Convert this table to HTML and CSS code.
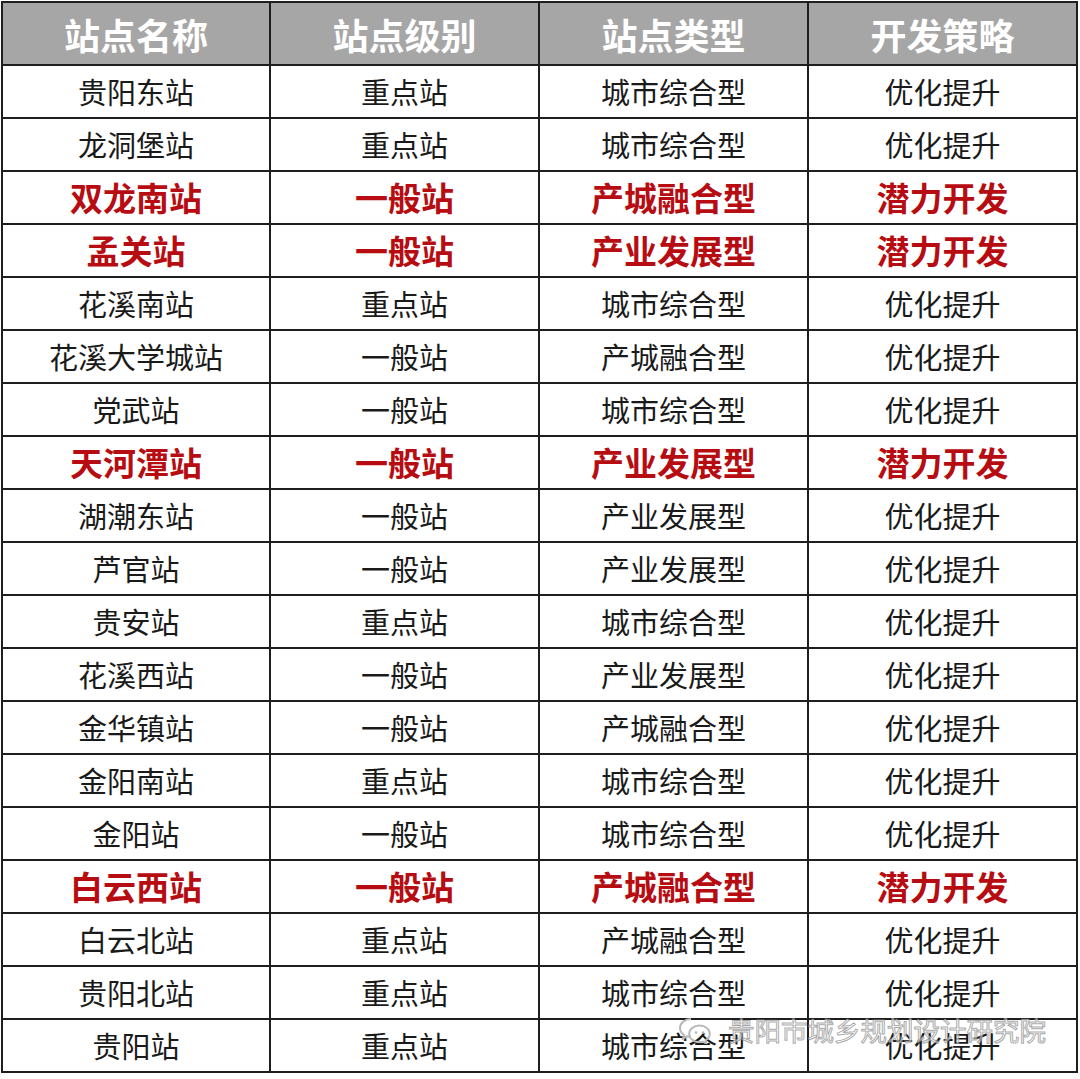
FILE: index.html
```html
<!DOCTYPE html>
<html lang="zh-CN">
<head>
<meta charset="utf-8">
<title>站点开发策略</title>
<link rel="stylesheet" href="styles.css">
</head>
<body>
<div class="page">
<table class="grid">
  <colgroup><col class="c1"><col class="c2"><col class="c3"><col class="c4"></colgroup>
  <thead>
    <tr><th>站点名称</th><th>站点级别</th><th>站点类型</th><th>开发策略</th></tr>
  </thead>
  <tbody>
    <tr><td>贵阳东站</td><td>重点站</td><td>城市综合型</td><td>优化提升</td></tr>
    <tr><td>龙洞堡站</td><td>重点站</td><td>城市综合型</td><td>优化提升</td></tr>
    <tr class="hl"><td>双龙南站</td><td>一般站</td><td>产城融合型</td><td>潜力开发</td></tr>
    <tr class="hl"><td>孟关站</td><td>一般站</td><td>产业发展型</td><td>潜力开发</td></tr>
    <tr><td>花溪南站</td><td>重点站</td><td>城市综合型</td><td>优化提升</td></tr>
    <tr><td>花溪大学城站</td><td>一般站</td><td>产城融合型</td><td>优化提升</td></tr>
    <tr><td>党武站</td><td>一般站</td><td>城市综合型</td><td>优化提升</td></tr>
    <tr class="hl"><td>天河潭站</td><td>一般站</td><td>产业发展型</td><td>潜力开发</td></tr>
    <tr><td>湖潮东站</td><td>一般站</td><td>产业发展型</td><td>优化提升</td></tr>
    <tr><td>芦官站</td><td>一般站</td><td>产业发展型</td><td>优化提升</td></tr>
    <tr><td>贵安站</td><td>重点站</td><td>城市综合型</td><td>优化提升</td></tr>
    <tr><td>花溪西站</td><td>一般站</td><td>产业发展型</td><td>优化提升</td></tr>
    <tr><td>金华镇站</td><td>一般站</td><td>产城融合型</td><td>优化提升</td></tr>
    <tr><td>金阳南站</td><td>重点站</td><td>城市综合型</td><td>优化提升</td></tr>
    <tr><td>金阳站</td><td>一般站</td><td>城市综合型</td><td>优化提升</td></tr>
    <tr class="hl"><td>白云西站</td><td>一般站</td><td>产城融合型</td><td>潜力开发</td></tr>
    <tr><td>白云北站</td><td>重点站</td><td>产城融合型</td><td>优化提升</td></tr>
    <tr><td>贵阳北站</td><td>重点站</td><td>城市综合型</td><td>优化提升</td></tr>
    <tr><td>贵阳站</td><td>重点站</td><td>城市综合型</td><td>优化提升</td></tr>
  </tbody>
</table>
<div class="watermark">
  <svg class="wm-icon" width="34" height="28" viewBox="0 0 34 28">
    <path d="M13 3C6.9 3 2 7 2 12c0 2.8 1.5 5.2 3.9 6.9L5 22.5l4.2-2.2c1.2.4 2.5.6 3.8.6" fill="none" stroke="#b9b9b9" stroke-width="2"/>
    <path d="M21.5 9.5c-5.8 0-10.3 3.7-10.3 8.3s4.5 8.3 10.3 8.3c1.1 0 2.2-.2 3.2-.5l3.8 2-.9-3.3c2.6-1.5 4.2-3.9 4.2-6.5 0-4.6-4.5-8.3-10.3-8.3z" fill="none" stroke="#b9b9b9" stroke-width="2"/>
    <circle cx="18" cy="16.5" r="1.3" fill="#b9b9b9"/>
    <circle cx="25" cy="16.5" r="1.3" fill="#b9b9b9"/>
  </svg>
  <span class="wm-text">贵阳市城乡规划设计研究院</span>
</div>
</div>
</body>
</html>
```

FILE: styles.css
```css
html, body {
  margin: 0;
  padding: 0;
  background: #ffffff;
}
.page {
  position: relative;
  width: 1080px;
  height: 1079px;
  padding: 1px 0 0 1px;
  box-sizing: border-box;
}
.grid {
  border-collapse: collapse;
  table-layout: fixed;
  width: 1077px;
  font-family: "Noto Sans CJK SC", "Noto Sans", sans-serif;
}
.c1 { width: 268px; }
.c2 { width: 269px; }
.c3 { width: 269px; }
.c4 { width: 269px; }
.grid th, .grid td {
  border: 2px solid #1e1e1e;
  text-align: center;
  vertical-align: middle;
  padding: 0;
  white-space: nowrap;
}
.grid thead tr { height: 63px; }
.grid th {
  background: #a6a6a6;
  color: #ffffff;
  font-size: 36px;
  font-weight: 700;
  line-height: 1;
}
.grid tbody tr { height: 53px; }
.grid td {
  color: #1a1a1a;
  font-size: 29px;
  font-weight: 400;
  line-height: 1;
}
.grid tr.hl td {
  color: #b70d12;
  font-size: 33px;
  font-weight: 700;
}
.watermark {
  position: absolute;
  left: 678px;
  top: 1016px;
  display: flex;
  align-items: center;
  gap: 16px;
  pointer-events: none;
}
.wm-text {
  font-family: "Noto Sans CJK SC", sans-serif;
  font-size: 26.5px;
  line-height: 1;
  color: rgba(255, 255, 255, 0.55);
  -webkit-text-stroke: 1px rgba(140, 140, 140, 0.75);
}
```
